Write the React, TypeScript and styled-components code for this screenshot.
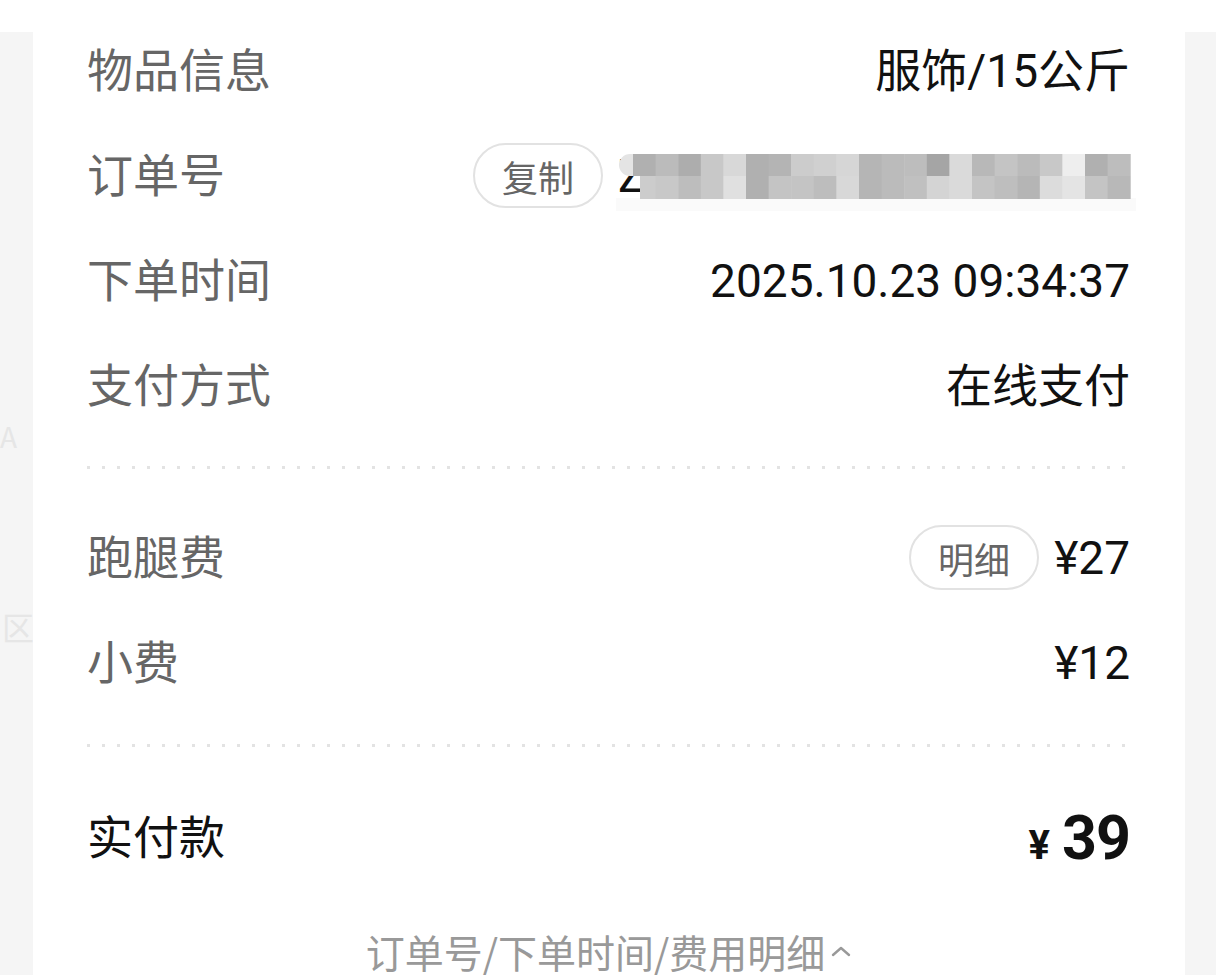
import React from "react";
import styled, { createGlobalStyle } from "styled-components";

const GlobalStyle = createGlobalStyle`
  html, body {
    margin: 0;
    padding: 0;
    background: #f5f5f5;
  }
  body {
    font-family: Roboto, "Noto Sans CJK SC", sans-serif;
    -webkit-font-smoothing: antialiased;
  }
`;

const Page = styled.div`
  position: relative;
  width: 1216px;
  height: 975px;
  overflow: hidden;
  background: #f5f5f5;
`;

const TopBar = styled.div`
  position: relative;
  z-index: 2;
  height: 32px;
  background: #fff;
`;

const MapLayer = styled.div`
  position: absolute;
  inset: 0;
  z-index: 0;
`;

const MapLabel = styled.span<{ $x: number; $y: number; $size: number }>`
  position: absolute;
  left: ${(p) => p.$x}px;
  top: ${(p) => p.$y}px;
  font-size: ${(p) => p.$size}px;
  line-height: 1;
  color: #e6e6e6;
  font-family: "Noto Sans CJK SC", sans-serif;
`;

const Card = styled.div`
  position: relative;
  z-index: 1;
  margin: -14px 31px 0 33px;
  padding: 0 55px 60px 54px;
  background: #fff;
`;

const Row = styled.div<{ $height?: number }>`
  display: flex;
  align-items: center;
  justify-content: space-between;
  height: ${(p) => p.$height ?? 105}px;
`;

const Label = styled.span<{ $strong?: boolean }>`
  font-family: Roboto, "Noto Sans CJK SC", sans-serif;
  font-size: 46px;
  line-height: 1;
  color: ${(p) => (p.$strong ? "#111" : "#666")};
`;

const Value = styled.span`
  font-size: 46px;
  line-height: 1;
  color: #111;
  white-space: nowrap;
`;

const ValueGroup = styled.div`
  display: flex;
  align-items: center;
  gap: 15px;
`;

const Pill = styled.button`
  display: flex;
  align-items: center;
  justify-content: center;
  box-sizing: border-box;
  width: 130px;
  height: 65px;
  padding: 0;
  border: 2px solid #e2e2e2;
  border-radius: 33px;
  background: #fff;
  font-family: "Noto Sans CJK SC", sans-serif;
  font-size: 36px;
  color: #666;
`;

const OrderNo = styled.div`
  position: relative;
  width: 512px;
  height: 46px;
  font-size: 46px;
  line-height: 46px;
  color: #111;
`;

const Mosaic = styled.svg`
  position: absolute;
  left: -2px;
  top: -12px;
`;

const Divider = styled.div<{ $top: number; $bottom: number }>`
  height: 3px;
  margin: ${(p) => p.$top}px 0 ${(p) => p.$bottom}px;
  background-image: repeating-linear-gradient(
    to right,
    #e3e3e3 0,
    #e3e3e3 3px,
    transparent 3px,
    transparent 15px
  );
`;

const Total = styled.div`
  display: flex;
  align-items: baseline;
  gap: 12px;
  color: #111;
  font-weight: 700;
`;

const Yen = styled.span`
  font-size: 40px;
`;

const Amount = styled.span`
  font-size: 61px;
  letter-spacing: -1px;
`;

const Footer = styled.div`
  display: flex;
  align-items: center;
  justify-content: center;
  gap: 6px;
  margin-top: 36px;
  font-family: "Noto Sans CJK SC", sans-serif;
  font-size: 39px;
  line-height: 44px;
  color: #999;
`;

const top = ["b0", "bb", "ad", "c8", "d8", "b0", "b4", "cc", "d0", "d6", "b5", "bb", "bd", "a5", "da", "b8", "c4", "bb", "c8", "ee", "b0", "bd"];
const bottom = ["cc", "c8", "bd", "c8", "e0", "b0", "c4", "c4", "bd", "d8", "b5", "bb", "c0", "d4", "da", "c4", "be", "b5", "dc", "e4", "c4", "b8"];

const CELL = 22.6;

const MaskedNumber = () => (
  <OrderNo>
    Z
    <Mosaic width="520" height="70" viewBox="0 0 520 70">
      <path d="M14 13 h20 v22 h-20 a11 11 0 0 1 0 -22 z" fill="#e4e4e4" />
      <rect x="0" y="57" width="520" height="14" fill="#fafafa" />
      {top.map((c, i) => (
        <rect key={"t" + i} x={17 + i * CELL} y={13} width={CELL + 0.5} height={22} fill={"#" + c + c + c} />
      ))}
      {bottom.map((c, i) => (
        <rect
          key={"b" + i}
          x={i === 0 ? 24 : 17 + i * CELL}
          y={35}
          width={i === 0 ? CELL - 6.5 : CELL + 0.5}
          height={23}
          fill={"#" + c + c + c}
        />
      ))}
    </Mosaic>
  </OrderNo>
);

const ChevronUp = () => (
  <svg width="20" height="12" viewBox="0 0 20 12">
    <polyline points="2,10 10,3 18,10" fill="none" stroke="#999" strokeWidth="2.4" strokeLinecap="round" strokeLinejoin="round" />
  </svg>
);

const App = () => {
  return (
    <Page>
      <GlobalStyle />
      <MapLayer>
        <MapLabel $x={0} $y={422} $size={28}>A</MapLabel>
        <MapLabel $x={2} $y={610} $size={32}>区</MapLabel>
      </MapLayer>
      <TopBar />
      <Card>
        <Row>
          <Label>物品信息</Label>
          <Value>服饰/15公斤</Value>
        </Row>
        <Row>
          <Label>订单号</Label>
          <ValueGroup>
            <Pill>复制</Pill>
            <MaskedNumber />
          </ValueGroup>
        </Row>
        <Row>
          <Label>下单时间</Label>
          <Value>2025.10.23 09:34:37</Value>
        </Row>
        <Row>
          <Label>支付方式</Label>
          <Value>在线支付</Value>
        </Row>
        <Divider $top={28} $bottom={36} />
        <Row>
          <Label>跑腿费</Label>
          <ValueGroup>
            <Pill>明细</Pill>
            <Value>¥27</Value>
          </ValueGroup>
        </Row>
        <Row>
          <Label>小费</Label>
          <Value>¥12</Value>
        </Row>
        <Divider $top={29} $bottom={36} />
        <Row $height={110}>
          <Label $strong>实付款</Label>
          <Total>
            <Yen>¥</Yen>
            <Amount>39</Amount>
          </Total>
        </Row>
        <Footer>
          订单号/下单时间/费用明细
          <ChevronUp />
        </Footer>
      </Card>
    </Page>
  );
};

export default App;
